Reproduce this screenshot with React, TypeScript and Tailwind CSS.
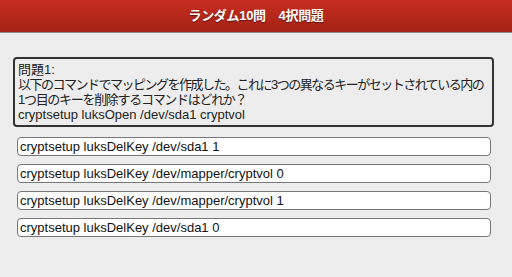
const options = [
  'cryptsetup luksDelKey /dev/sda1 1',
  'cryptsetup luksDelKey /dev/mapper/cryptvol 0',
  'cryptsetup luksDelKey /dev/mapper/cryptvol 1',
  'cryptsetup luksDelKey /dev/sda1 0',
]

export default function App() {
  return (
    <div
      className="w-[512px] h-[277px] bg-[#ededed] overflow-hidden"
      style={{ fontFamily: '"Liberation Sans", "Noto Sans CJK JP", sans-serif' }}
    >
      <div className="h-[33px] flex items-center justify-center bg-gradient-to-b from-[#c72d1f] to-[#a52317] border-b border-[#8a8a8a]">
        <span className="text-white text-[13px] font-bold tracking-[-0.3px] [text-shadow:0_1px_1px_rgba(0,0,0,0.5)]">
          ランダム10問　4択問題
        </span>
      </div>

      <div className="pt-[24px] pl-[13px] pr-[18px]">
        <div className="border-[2.5px] border-[#333] rounded-[4px] px-[3px] pt-[3px] pb-[3px] text-[13px] leading-[15px] text-[#222]">
          <div>問題1:</div>
          <div className="tracking-[-1.5px] whitespace-nowrap">
            以下のコマンドでマッピングを作成した。これに3つの異なるキーがセットされている内の
          </div>
          <div className="tracking-[-1.3px] whitespace-nowrap">1つ目のキーを削除するコマンドはどれか？</div>
          <div>cryptsetup luksOpen /dev/sda1 cryptvol</div>
        </div>

        <div className="mt-[10px] pl-[4px] pr-[3px] flex flex-col gap-[8px]">
          {options.map(o => (
            <div
              key={o}
              className="h-[19px] bg-white border border-[#777] rounded-[4px] pl-[2px] text-[13px] leading-[17px] text-[#111]"
            >
              {o}
            </div>
          ))}
        </div>
      </div>
    </div>
  )
}
